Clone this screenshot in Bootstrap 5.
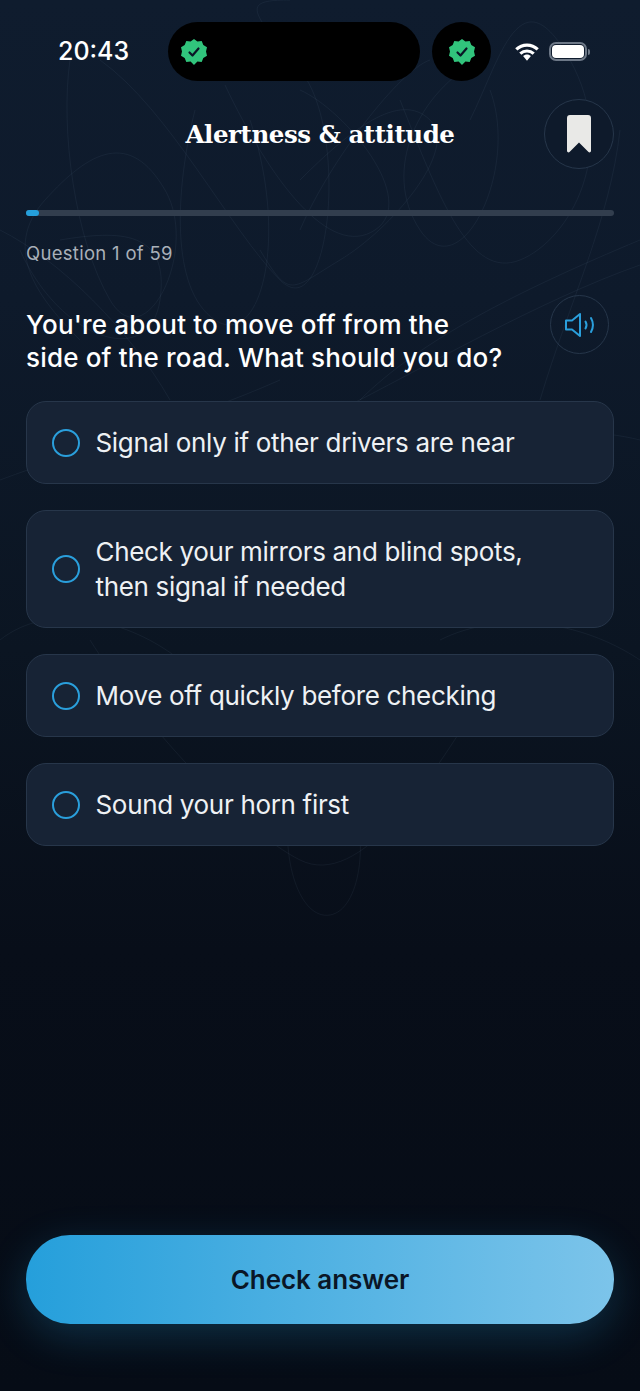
<!DOCTYPE html>
<html lang="en">
<head>
    <meta charset="UTF-8">
    <meta name="viewport" content="width=device-width, initial-scale=1.0">
    <title>Alertness &amp; attitude</title>
    <link rel="stylesheet" href="https://cdn.jsdelivr.net/npm/bootstrap@5.3.0/dist/css/bootstrap.min.css">
    <style>
        html, body { height: 1391px; overflow: hidden; }
        body {
            background: linear-gradient(180deg, #0f1c2e 0, #0e1a2b 300px, #0b1522 650px, #080e19 950px, #060c16 100%);
            font-family: Inter, "Noto Sans", sans-serif;
            color: #f4f6f8;
        }
        .screen { height: 1391px; position: relative; z-index: 1; }
        .doodles { position: absolute; left: 0; top: 0; width: 640px; height: 950px; z-index: 0; }
        .doodles path { fill: none; stroke: #8fb4d8; stroke-opacity: .065; stroke-width: 1; }

        .status-row { height: 59px; margin-top: 22px; padding-left: 58px; }
        .clock { width: 110px; font-size: 25px; font-weight: 500; color: #fff; }
        .island { width: 252px; height: 59px; background: #000; border-radius: 30px; padding-left: 13px; }
        .island-dot { width: 59px; height: 59px; background: #000; border-radius: 50%; margin-left: 12px; }
        .status-icons { margin-left: 24px; gap: 10px; }
        .batt { width: 38px; height: 19px; border: 2px solid #6d7887; border-radius: 7px; padding: 1px; }
        .batt-fill { height: 100%; background: #fff; border-radius: 4px; }
        .batt-tip { width: 2px; height: 6px; background: #6d7887; border-radius: 0 2px 2px 0; margin-left: 1px; }

        .title-row { height: 70px; margin-top: 18px; padding: 2px 26px 0; position: relative; }
        .page-title { font-family: "DejaVu Serif", "Liberation Serif", serif; font-weight: 700; font-size: 24.5px; letter-spacing: -.45px; color: #fff; margin: 0; }
        .round-btn { position: absolute; right: 26px; top: 0; width: 70px; height: 70px; border-radius: 50%; background: #0e1a2b; border: 1px solid #26364a; padding: 0; }

        .track { height: 6px; margin: 41px 26px 0; background: #323e4e; border-radius: 3px; }
        .track-fill { height: 100%; background: #259fdb; border-radius: 3px; }
        .counter { margin: 25px 26px 0; font-size: 18.5px; line-height: 24px; color: #a9b0b9; letter-spacing: .3px; }

        .question-row { margin: 43px 26px 0; position: relative; }
        .question { font-size: 26px; font-weight: 500; line-height: 33px; color: #fff; margin: 0; letter-spacing: .17px; }
        .sound-btn { position: absolute; right: 5px; top: -13px; width: 59px; height: 59px; border-radius: 50%; background: transparent; border: 1px solid #26364a; padding: 0; }

        .answers { margin: 27px 26px 0; gap: 26px; }
        .answer {
            min-height: 83px; padding: 23px 25px; gap: 15.5px;
            background: #172335; border: 1px solid #27364a; border-radius: 20px;
            color: #eef1f4; font-size: 26px; line-height: 35px; letter-spacing: -.32px; text-align: left;
        }
        .radio-ring { flex: 0 0 28px; width: 28px; height: 28px; border: 2.5px solid #2a9fdc; border-radius: 50%; }

        .check-btn {
            height: 89px; margin: auto 26px 67px; width: 588px; border: 0; border-radius: 44px;
            background: linear-gradient(90deg, #259fdb 0, #7cc4ea 100%);
            color: #0a1626; font-size: 26px; font-weight: 600; letter-spacing: -.05px;
            box-shadow: 0 12px 42px rgba(37, 159, 219, .24);
        }
    </style>
</head>
<body>
    <svg class="doodles" viewBox="0 0 640 950">
        <path d="M70 60C60 130 75 240 110 300S200 250 165 190 90 150 45 200 40 300 80 340"/>
        <path d="M100 60C170 110 230 230 280 280S350 130 300 70 240 0 290 0"/>
        <path d="M195 110C175 190 170 290 215 320S290 240 250 120"/>
        <path d="M225 85C270 180 330 260 375 230S345 110 300 90"/>
        <path d="M300 180C350 130 400 90 430 120S390 230 340 260 290 300 260 250"/>
        <path d="M480 60C420 90 380 170 420 230S520 170 490 90"/>
        <path d="M430 60C400 70 330 160 300 230"/>
        <path d="M400 100C440 200 470 280 520 260S620 150 570 60 500 60 470 120"/>
        <path d="M360 400C420 340 520 290 640 240"/>
        <path d="M340 410C420 370 540 300 640 265"/>
        <path d="M0 230C60 260 130 330 170 400"/>
        <path d="M20 250C60 340 150 370 160 300S120 230 60 240"/>
        <path d="M0 480C80 450 190 420 280 380"/>
        <path d="M380 480C450 440 560 420 640 440"/>
        <path d="M0 640C50 600 130 620 180 660S120 740 70 700"/>
        <path d="M440 640C500 610 580 620 640 660"/>
        <path d="M290 800C280 860 300 920 330 915S370 840 350 790"/>
        <path d="M90 640C140 720 240 830 300 860S430 780 480 700"/>
        <path d="M620 130C610 220 570 300 540 400"/>
    </svg>

    <div class="screen d-flex flex-column">
        <div class="status-row d-flex align-items-center">
            <div class="clock">20:43</div>
            <div class="island d-flex align-items-center">
                <svg width="26" height="26" viewBox="0 0 26 26">
                    <path fill="#31c47c" d="M13 0l3.4 2.6 4.3-.5 1.6 4 3.7 2.2-1 4.2 1 4.2-3.7 2.2-1.6 4-4.3-.5L13 26l-3.4-3.6-4.3.5-1.6-4L0 16.700l1-4.2-1-4.200 3.700-2.200 1.600-4 4.300.5z"/>
                    <path fill="none" stroke="#0a1626" stroke-width="2.200" stroke-linecap="round" stroke-linejoin="round" d="M8.500 13.500l3 3 6-7"/>
                </svg>
            </div>
            <div class="island-dot d-flex align-items-center justify-content-center">
                <svg width="26" height="26" viewBox="0 0 26 26">
                    <path fill="#31c47c" d="M13 0l3.4 2.6 4.3-.5 1.6 4 3.7 2.2-1 4.2 1 4.2-3.7 2.2-1.6 4-4.3-.5L13 26l-3.4-3.6-4.3.5-1.6-4L0 16.700l1-4.2-1-4.200 3.700-2.200 1.600-4 4.300.5z"/>
                    <path fill="none" stroke="#0a1626" stroke-width="2.200" stroke-linecap="round" stroke-linejoin="round" d="M8.500 13.500l3 3 6-7"/>
                </svg>
            </div>
            <div class="status-icons d-flex align-items-center">
                <svg width="24" height="18" viewBox="0 0 24 18">
                    <path fill="none" stroke="#fff" stroke-width="3.200" d="M1.300 6.300C7.300.6 16.700.6 22.700 6.300"/>
                    <path fill="none" stroke="#fff" stroke-width="3.200" d="M5.300 10.600c3.800-3.500 9.600-3.500 13.400 0"/>
                    <path fill="#fff" d="M12 11.600c-1.500 0-2.900.6-3.900 1.500l3.900 4.700 3.900-4.700c-1-.9-2.400-1.500-3.900-1.500z"/>
                </svg>
                <div class="d-flex align-items-center">
                    <div class="batt"><div class="batt-fill"></div></div>
                    <div class="batt-tip"></div>
                </div>
            </div>
        </div>

        <div class="title-row d-flex align-items-center justify-content-center">
            <h1 class="page-title">Alertness &amp; attitude</h1>
            <button class="round-btn d-flex align-items-center justify-content-center" aria-label="Bookmark">
                <svg width="24" height="38" viewBox="0 0 24 38">
                    <path fill="#e9e9e7" d="M3 0h18a3 3 0 0 1 3 3v33a1.500 1.500 0 0 1-2.500 1L12 27.500 2.500 37A1.500 1.500 0 0 1 0 36V3a3 3 0 0 1 3-3z"/>
                </svg>
            </button>
        </div>

        <div class="track"><div class="track-fill" style="width: 2.2%"></div></div>
        <div class="counter">Question 1 of 59</div>

        <div class="question-row">
            <p class="question">You're about to move off from the<br>side of the road. What should you do?</p>
            <button class="sound-btn d-flex align-items-center justify-content-center" aria-label="Read aloud">
                <svg width="32" height="26" viewBox="0 0 32 26" fill="none" stroke="#2a9fdc" stroke-width="2" stroke-linecap="round" stroke-linejoin="round">
                    <path d="M2 8.500h6L16 2v22l-8-6.500H2z"/>
                    <path d="M21.500 9.500c1.300 2.200 1.300 4.800 0 7"/>
                    <path d="M27 6c2.400 4.300 2.400 9.700 0 14"/>
                </svg>
            </button>
        </div>

        <div class="answers d-flex flex-column">
            <div class="answer d-flex align-items-center"><span class="radio-ring"></span><span>Signal only if other drivers are near</span></div>
            <div class="answer d-flex align-items-center"><span class="radio-ring"></span><span>Check your mirrors and blind spots,<br>then signal if needed</span></div>
            <div class="answer d-flex align-items-center"><span class="radio-ring"></span><span>Move off quickly before checking</span></div>
            <div class="answer d-flex align-items-center"><span class="radio-ring"></span><span>Sound your horn first</span></div>
        </div>

        <button class="btn check-btn">Check answer</button>
    </div>
</body>
</html>
